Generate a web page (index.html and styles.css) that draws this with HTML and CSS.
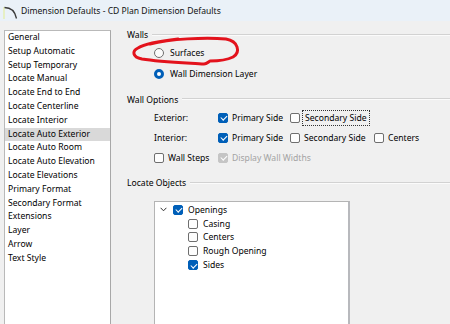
FILE: index.html
```html
<!DOCTYPE html>
<html>
<head>
<meta charset="utf-8">
<link rel="stylesheet" href="styles.css">
</head>
<body>
<div class="win">
  <div class="titlebar">
    <svg class="appicon" width="16" height="16" viewBox="0 0 16 16">
      <rect x="1" y="4" width="2" height="12" fill="#e6efc4"/>
      <path d="M2.5 4.5 C 9 4.5, 13 8, 14.5 15.5" fill="none" stroke="#3a3a3a" stroke-width="1.3"/>
    </svg>
    <span class="title">Dimension Defaults - CD Plan Dimension Defaults</span>
  </div>
  <div class="main">
    <ul class="nav">
      <li>General</li>
      <li>Setup Automatic</li>
      <li>Setup Temporary</li>
      <li>Locate Manual</li>
      <li>Locate End to End</li>
      <li>Locate Centerline</li>
      <li>Locate Interior</li>
      <li class="sel">Locate Auto Exterior</li>
      <li>Locate Auto Room</li>
      <li>Locate Auto Elevation</li>
      <li>Locate Elevations</li>
      <li>Primary Format</li>
      <li>Secondary Format</li>
      <li>Extensions</li>
      <li>Layer</li>
      <li>Arrow</li>
      <li>Text Style</li>
    </ul>
    <div class="panel">
      <div class="group-head"><span>Walls</span><i class="rule"></i></div>
      <div class="radios">
        <div class="opt"><span class="rb"></span><span>Surfaces</span></div>
        <div class="opt"><span class="rb on"></span><span>Wall Dimension Layer</span></div>
      </div>

      <div class="group-head gh2"><span>Wall Options</span><i class="rule"></i></div>
      <div class="opts">
        <span class="lbl">Exterior:</span>
        <div class="opt"><span class="cb on"></span><span>Primary Side</span></div>
        <div class="opt"><span class="cb"></span><span class="focus">Secondary Side</span></div>
        <span></span>

        <span class="lbl">Interior:</span>
        <div class="opt"><span class="cb on"></span><span>Primary Side</span></div>
        <div class="opt"><span class="cb"></span><span>Secondary Side</span></div>
        <div class="opt"><span class="cb"></span><span>Centers</span></div>

        <div class="opt"><span class="cb"></span><span>Wall Steps</span></div>
        <div class="opt span3 disabled"><span class="cb on dis"></span><span>Display Wall Widths</span></div>
      </div>

      <div class="group-head gh3"><span>Locate Objects</span><i class="rule"></i></div>
      <div class="tree">
        <div class="node root">
          <svg class="chev" width="7" height="5" viewBox="0 0 7 5"><path d="M0.6 0.8 L3.5 3.8 L6.4 0.8" fill="none" stroke="#333" stroke-width="1"/></svg>
          <span class="cb on"></span><span>Openings</span>
        </div>
        <div class="node child"><span class="cb"></span><span>Casing</span></div>
        <div class="node child"><span class="cb"></span><span>Centers</span></div>
        <div class="node child"><span class="cb"></span><span>Rough Opening</span></div>
        <div class="node child"><span class="cb on"></span><span>Sides</span></div>
      </div>
    </div>
  </div>
  <svg class="scribble" width="450" height="324" viewBox="0 0 450 324">
    <path d="M150 44 C 170 39, 205 37, 226 39 C 238 41, 241 52, 233 57 C 227 60, 217 61, 210 61 C 208 62, 207 64, 204 64 C 190 63, 160 62, 142 59 C 132 57, 132 51, 138 48 C 146 43, 160 41, 178 39"
      fill="none" stroke="#e3121c" stroke-width="3" stroke-linecap="round" stroke-linejoin="round"/>
  </svg>
</div>
</body>
</html>
```

FILE: styles.css
```css
* { box-sizing: border-box; }
html, body {
  margin: 0;
  padding: 0;
  background: #f0f0f0;
}
body {
  font-family: "Noto Sans", "DejaVu Sans", sans-serif;
  font-size: 8.6px;
  color: #000;
}
.win {
  position: relative;
  width: 450px;
  height: 324px;
  overflow: hidden;
  background: #f0f0f0;
}
.titlebar {
  height: 21px;
  background: #eaf1f8;
  display: flex;
  align-items: center;
  padding-left: 2px;
  gap: 3px;
  font-size: 8.6px;
}
.appicon { display: block; }
.title { color: #111; }

.main {
  display: flex;
  align-items: flex-start;
  padding-left: 4px;
}
.nav {
  list-style: none;
  margin: 9px 0 0 0;
  padding: 0;
  width: 107px;
  height: 320px;
  background: #fff;
  border: 1px solid #b9b9b9;
  border-right-color: #a8a8a8;
}
.nav li {
  height: 13.8px;
  line-height: 13.8px;
  padding-left: 3px;
  white-space: nowrap;
}
.nav li.sel { background: #d9d9d9; }

.panel {
  flex: 1;
  margin-left: 16px;
  padding-top: 7px;
}
.group-head {
  display: flex;
  align-items: center;
  height: 14px;
  gap: 4px;
}
.group-head .rule {
  flex: 1;
  height: 2px;
  border-top: 1px solid #d2d2d2;
  border-bottom: 1px solid #fbfbfb;
  margin-top: -1px;
}
.radios {
  display: flex;
  flex-direction: column;
  gap: 7px;
  margin-top: 4px;
  padding-left: 27px;
}
.radios .opt { gap: 6px; }
.opt {
  display: flex;
  align-items: center;
  height: 14px;
  gap: 4px;
  white-space: nowrap;
}
.rb {
  width: 10px;
  height: 10px;
  border-radius: 50%;
  border: 1px solid #6f6f6f;
  background: #fbfbfb;
  flex: none;
}
.rb.on {
  border: 3px solid #005fb8;
  background: #fff;
}
.cb {
  position: relative;
  width: 10px;
  height: 10px;
  border-radius: 2px;
  border: 1px solid #6e6e6e;
  background: #fdfdfd;
  flex: none;
}
.cb.on {
  background: #005fb8;
  border-color: #005fb8;
}
.cb.on::after {
  content: "";
  position: absolute;
  left: 2.6px;
  top: 0.6px;
  width: 2.6px;
  height: 5px;
  border: solid #fff;
  border-width: 0 1.2px 1.2px 0;
  transform: rotate(45deg);
}
.cb.dis {
  background: #c5c5c5;
  border-color: #c5c5c5;
}
.disabled { color: #a3a3a3; }

.gh2 { margin-top: 11.5px; }
.opts {
  display: grid;
  grid-template-columns: 64px 72px 84px auto;
  row-gap: 6px;
  margin-top: 4px;
  padding-left: 27px;
}
.opts .lbl {
  height: 14px;
  line-height: 14px;
}
.span3 { grid-column: span 3; }
.focus {
  outline: 1px dotted #333;
  outline-offset: 1px;
  padding: 0 1px;
}

.gh3 { margin-top: 11.5px; }
.tree {
  margin: 11px 0 0 27px;
  width: 196px;
  height: 140px;
  background: #fff;
  border: 1px solid #b4b4b4;
  border-right: 2px solid #b8b9bd;
  padding-top: 1px;
}
.node {
  display: flex;
  align-items: center;
  height: 13.8px;
  gap: 5px;
}
.node.root { padding-left: 5px; }
.node.root .chev { margin-right: 1px; }
.node.child { padding-left: 33px; }

.scribble {
  position: absolute;
  left: 0;
  top: 0;
  pointer-events: none;
}
```
